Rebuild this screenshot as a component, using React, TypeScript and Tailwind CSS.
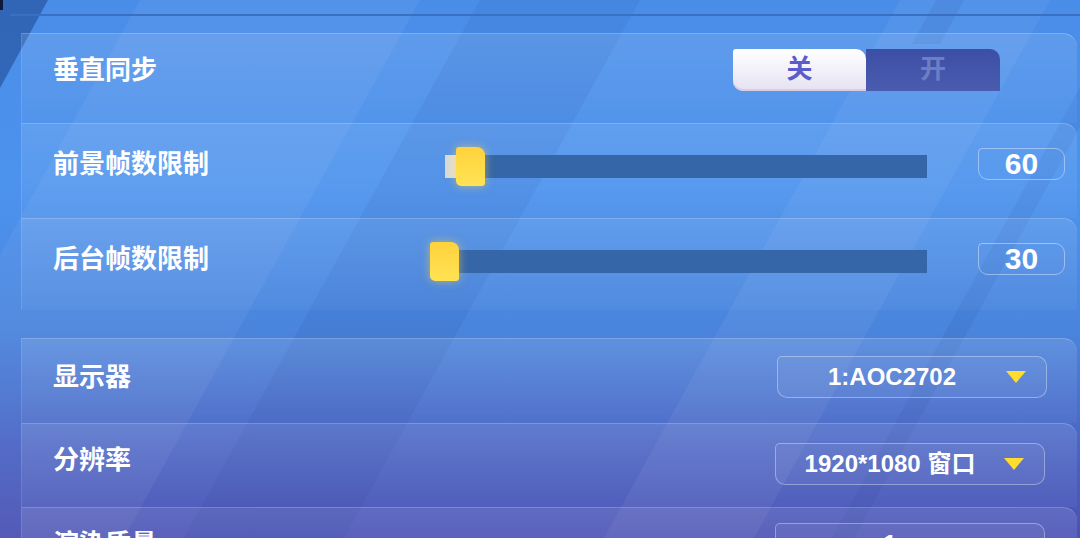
import type { ReactNode } from "react";

const SLIDER_MIN = 30;
const SLIDER_MAX = 580;
const TRACK_W = 482;

const Backdrop = () => (
  <svg
    className="pointer-events-none absolute inset-0"
    width="1080"
    height="538"
    viewBox="0 0 1080 538"
  >
    {/* diagonal light / dark bands of the game background */}
    <polygon points="140,0 420,0 124,538 -156,538" fill="#ffffff" opacity="0.05" />
    <polygon points="480,0 640,0 344,538 184,538" fill="#123080" opacity="0.07" />
    <polygon points="900,0 1050,0 754,538 604,538" fill="#ffffff" opacity="0.05" />
    <polygon points="1128,0 1150,0 854,538 832,538" fill="#10307a" opacity="0.08" />
    <polygon points="936,0 964,0 940,44 912,44" fill="#10307a" opacity="0.08" />
    <polygon points="0,0 48,0 0,88" fill="#2a58a6" opacity="0.75" />
    <rect x="0" y="0" width="3" height="10" fill="#0d1a3a" />
  </svg>
);

const Panel = ({ className, children }: { className: string; children: ReactNode }) => (
  <div
    className={`relative flex items-center justify-between rounded-tr-[14px] border-t border-l border-t-white/25 border-l-white/12 bg-linear-to-b from-white/12 to-white/4 pl-[31px] ${className}`}
  >
    {children}
  </div>
);

const Label = ({ children, wide }: { children: ReactNode; wide?: boolean }) => (
  <span className={`text-[26px] leading-none font-bold ${wide ? "w-[392px] shrink-0" : ""}`}>
    {children}
  </span>
);

const Slider = ({ value }: { value: number }) => {
  const pos = ((value - SLIDER_MIN) / (SLIDER_MAX - SLIDER_MIN)) * TRACK_W;
  return (
    <div className="relative mt-[5px] h-[23px] w-[482px] shrink-0 bg-[#3566a8]">
      <div
        className="absolute inset-y-0 left-0 bg-linear-to-r from-[#d8d8d2] to-[#efeee6]"
        style={{ width: pos }}
      />
      <div
        className="absolute top-[-8px] h-[39px] w-[29px] rounded-tl-[3px] rounded-tr-[8px] rounded-br-[3px] rounded-bl-[5px] bg-linear-to-b from-[#ffd23c] to-[#ffe353] shadow-[0_0_10px_rgba(255,214,80,0.55)]"
        style={{ left: pos - 15 }}
      />
    </div>
  );
};

const ValueBox = ({ value }: { value: number }) => (
  <div className="mr-[12px] ml-[51px] flex h-[32px] w-[88px] items-center justify-center rounded-[10px] rounded-tl-[4px] border border-white/40 text-[30px] leading-none font-bold">
    {value}
  </div>
);

const Dropdown = ({ text, className = "" }: { text: string; className?: string }) => (
  <div
    className={`flex h-[42px] w-[270px] items-center rounded-[10px] rounded-tl-[5px] border border-white/35 bg-white/5 ${className}`}
  >
    <span className="flex-1 text-center text-[24px] leading-none font-bold">{text}</span>
    <svg className="mr-[20px]" width="20" height="12" viewBox="0 0 20 12">
      <polygon points="0,0 20,0 10,12" fill="#ffdc2e" />
    </svg>
  </div>
);

export default function App() {
  return (
    <div className="relative h-[538px] w-[1080px] overflow-hidden bg-[linear-gradient(180deg,#4a8de8_0%,#4c93ee_35%,#4a84dc_62%,#4a62c2_85%,#4a52b4_100%)] font-['Liberation_Sans','Noto_Sans_CJK_SC',sans-serif] text-white">
      <Backdrop />
      <div className="relative pt-[14px]">
        {/* header divider */}
        <div className="ml-[10px] h-[2px] bg-[#3a6fc2]" />

        <div className="mt-[17px] mr-[3px] ml-[21px] flex flex-col">
          <Panel className="h-[90px] pb-[18px]">
            <Label>垂直同步</Label>
            <div className="mr-[77px] flex h-[42px] w-[267px]">
              <div className="flex w-[133px] items-center justify-center rounded-tl-[3px] rounded-tr-[10px] rounded-bl-[10px] bg-linear-to-b from-white to-[#e6e2f2] text-[26px] font-bold text-[#5a5ccc] shadow-[inset_0_-2px_0_#dccbe2]">
                关
              </div>
              <div className="flex flex-1 items-center justify-center rounded-tr-[10px] bg-linear-to-b from-[#3c4fa6] to-[#4a5cae] text-[26px] font-bold text-[#6c7fc6]">
                开
              </div>
            </div>
          </Panel>

          <Panel className="h-[95px] justify-start pb-[14px]">
            <Label wide>前景帧数限制</Label>
            <Slider value={60} />
            <ValueBox value={60} />
          </Panel>

          <Panel className="h-[92px] justify-start pb-[12px]">
            <Label wide>后台帧数限制</Label>
            <Slider value={30} />
            <ValueBox value={30} />
          </Panel>

          <div className="h-[28px]" />

          <Panel className="h-[85px] pb-[9px]">
            <Label>显示器</Label>
            <Dropdown text="1:AOC2702" className="mr-[30px]" />
          </Panel>

          <Panel className="h-[84px] pb-[12px]">
            <Label>分辨率</Label>
            <Dropdown text="1920*1080 窗口" className="mt-[8px] mr-[32px]" />
          </Panel>

          <Panel className="h-[84px] pb-[12px]">
            <Label>渲染质量</Label>
            <Dropdown text="1" className="mr-[32px]" />
          </Panel>
        </div>
      </div>
    </div>
  );
}
